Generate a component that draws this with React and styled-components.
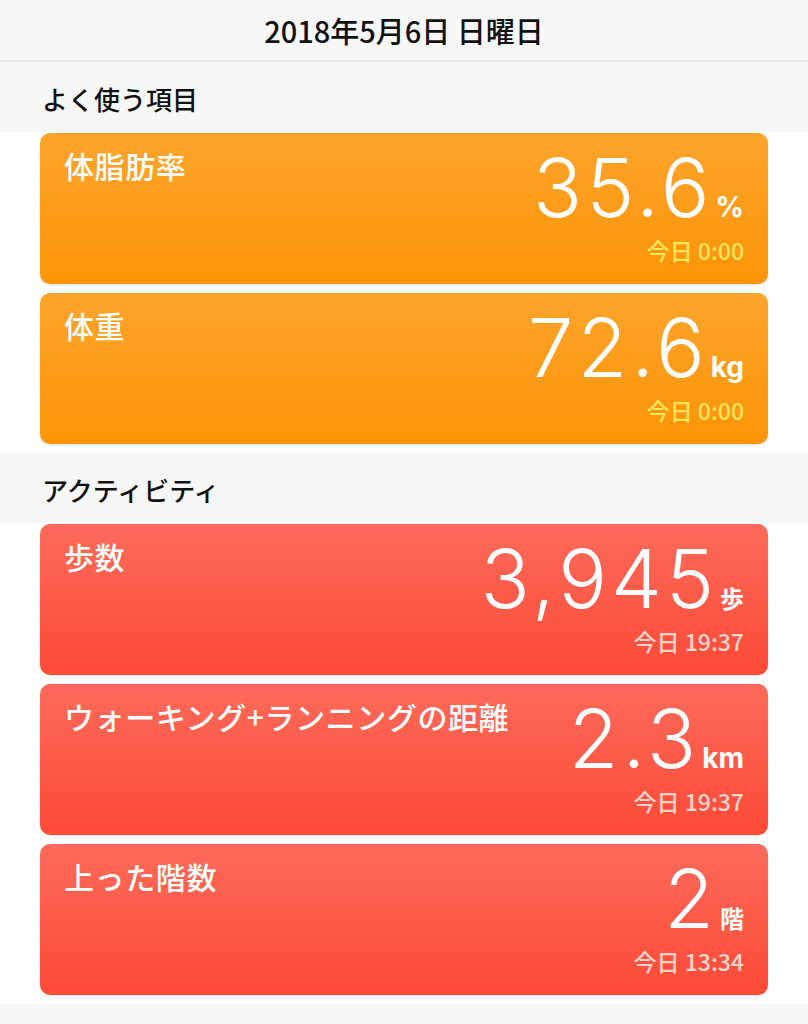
import styled, { createGlobalStyle } from 'styled-components';

const GlobalStyle = createGlobalStyle`
  html, body {
    margin: 0;
    padding: 0;
    background: #ffffff;
    font-family: "Noto Sans CJK JP", "Noto Sans", sans-serif;
  }
`

const themes = {
  orange: { top: '#fea42c', bottom: '#fd9407', time: '#ffe65a' },
  red: { top: '#fe6a5a', bottom: '#fd4a37', time: '#ffd6cc' },
}

const sections = [
  {
    title: 'よく使う項目',
    tone: 'orange',
    items: [
      { label: '体脂肪率', value: '35.6', unit: '%', time: '今日 0:00' },
      { label: '体重', value: '72.6', unit: 'kg', time: '今日 0:00' },
    ],
  },
  {
    title: 'アクティビティ',
    tone: 'red',
    items: [
      { label: '歩数', value: '3,945', unit: '歩', time: '今日 19:37' },
      { label: 'ウォーキング+ランニングの距離', value: '2.3', unit: 'km', time: '今日 19:37' },
      { label: '上った階数', value: '2', unit: '階', time: '今日 13:34' },
    ],
  },
]

function App() {
  return (
    <Page>
      <GlobalStyle />
      <Header>2018年5月6日 日曜日</Header>
      {sections.map((s) => (
        <section key={s.title}>
          <SectionTitle>{s.title}</SectionTitle>
          <CardList>
            {s.items.map((it) => (
              <Card key={it.label} $tone={s.tone}>
                <Label>{it.label}</Label>
                <Right>
                  <ValueRow>
                    <Value>{it.value}</Value>
                    <Unit $cjk={/[^a-z%]/.test(it.unit)}>{it.unit}</Unit>
                  </ValueRow>
                  <Time $tone={s.tone}>{it.time}</Time>
                </Right>
              </Card>
            ))}
          </CardList>
        </section>
      ))}
      <Footer />
    </Page>
  )
}

const Page = styled.div`
  width: 808px;
  min-height: 1024px;
  display: flex;
  flex-direction: column;
  background: #ffffff;
`
const Header = styled.div`
  height: 60px;
  display: flex;
  align-items: center;
  justify-content: center;
  background: #f7f7f7;
  border-bottom: 2px solid #e6e6e6;
  font-size: 29px;
  font-weight: 500;
  color: #111;
`
const SectionTitle = styled.div`
  height: 70px;
  display: flex;
  align-items: center;
  padding: 0 42px;
  padding-top: 2px;
  box-sizing: border-box;
  background: #f7f7f7;
  font-size: 26px;
  font-weight: 500;
  color: #111;
`
const CardList = styled.div`
  display: flex;
  flex-direction: column;
  gap: 9px;
  padding: 1px 40px 9px 40px;
  background: #ffffff;
`
const Card = styled.div`
  height: 151px;
  box-sizing: border-box;
  display: flex;
  justify-content: space-between;
  padding: 13px 24px 0 24px;
  border-radius: 10px;
  background: linear-gradient(180deg, ${(p) => themes[p.$tone].top}, ${(p) => themes[p.$tone].bottom});
  box-shadow: 0 1px 2px rgba(0, 0, 0, 0.12);
  color: #ffffff;
`
const Label = styled.div`
  font-size: 30px;
  font-weight: 500;
  line-height: 38px;
  letter-spacing: 0.6px;
`
const Right = styled.div`
  display: flex;
  flex-direction: column;
  align-items: flex-end;
`
const ValueRow = styled.div`
  display: flex;
  align-items: baseline;
  margin-top: -6px;
`
const Value = styled.span`
  font-family: Inter, Roboto, "Liberation Sans", sans-serif;
  font-weight: 300;
  font-size: 81px;
  line-height: 96px;
  letter-spacing: 4px;
`
const Unit = styled.span`
  font-family: ${(p) => (p.$cjk ? '"Noto Sans CJK JP", sans-serif' : 'Inter, Roboto, "Liberation Sans", sans-serif')};
  font-weight: 700;
  font-size: ${(p) => (p.$cjk ? '24px' : '28px')};
  margin-left: 2px;
`
const Time = styled.div`
  margin-top: -3px;
  font-size: 23px;
  font-weight: 500;
  color: ${(p) => themes[p.$tone].time};
`
const Footer = styled.div`
  flex: 1;
  background: #f7f7f7;
`

export default App
